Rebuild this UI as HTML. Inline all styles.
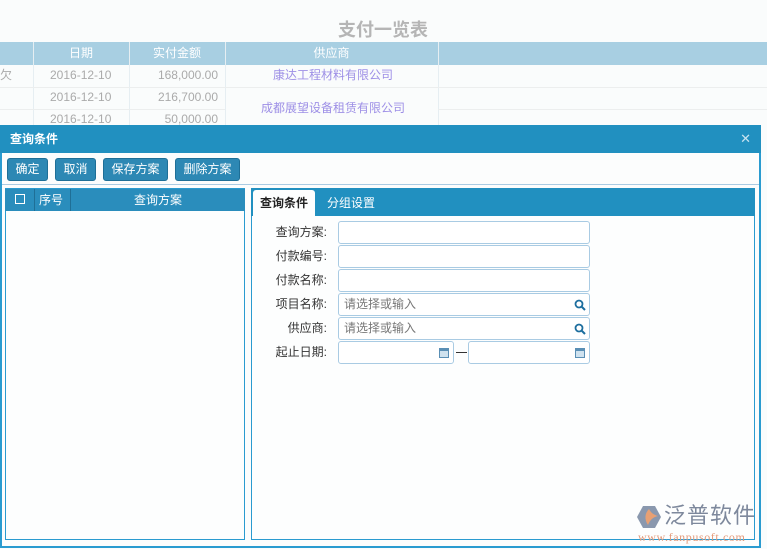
<!DOCTYPE html>
<html><head><meta charset="utf-8"><style>
*{margin:0;padding:0;box-sizing:border-box}
body{width:767px;height:549px;overflow:hidden;background:#fafcfc;font-family:"Liberation Sans","Noto Sans CJK SC",sans-serif;font-size:12px;position:relative}
.a{position:absolute}
.th{top:42px;height:23px;background:#a8cfe2;color:#fff;font-size:12px;line-height:23px;text-align:center}
.td{color:#aaa;font-size:12px;line-height:22px}
.hl{background:#eceeee;height:1px}
.btn{position:absolute;top:158px;height:23px;background:#2d88b4;border:1px solid #1e6f97;border-radius:3px;color:#fff;font-size:12px;line-height:21px;text-align:center}
.lbl{position:absolute;left:255px;width:72px;text-align:right;font-size:12px;color:#333}
.inp{position:absolute;left:338px;width:252px;height:23px;border:1px solid #a9cbe3;border-radius:3px;background:#fff;color:#777;font-size:12px;line-height:21px;padding-left:5px}
</style></head><body>
<div class="a" style="left:338px;top:16px;font-size:18px;font-weight:bold;color:#b5b5b5">支付一览表</div>
<div class="a th" style="left:0;width:767px"></div>
<div class="a th" style="left:33px;width:96px">日期</div>
<div class="a th" style="left:129px;width:96px">实付金额</div>
<div class="a th" style="left:225px;width:213px">供应商</div>
<div class="a" style="left:33px;top:42px;width:1px;height:85px;background:#e6eef2"></div>
<div class="a" style="left:129px;top:42px;width:1px;height:85px;background:#e6eef2"></div>
<div class="a" style="left:225px;top:42px;width:1px;height:85px;background:#e6eef2"></div>
<div class="a" style="left:438px;top:42px;width:1px;height:85px;background:#e6eef2"></div>
<div class="a hl" style="left:0;top:87px;width:767px"></div>
<div class="a hl" style="left:0;top:109px;width:225px"></div>
<div class="a hl" style="left:438px;top:109px;width:330px"></div>
<div class="a td" style="left:0;top:64px">欠</div>
<div class="a td" style="left:50px;top:64px">2016-12-10</div>
<div class="a td" style="left:50px;top:86px">2016-12-10</div>
<div class="a td" style="left:50px;top:108px">2016-12-10</div>
<div class="a td" style="left:129px;top:64px;width:89px;text-align:right">168,000.00</div>
<div class="a td" style="left:129px;top:86px;width:89px;text-align:right">216,700.00</div>
<div class="a td" style="left:129px;top:108px;width:89px;text-align:right">50,000.00</div>
<div class="a td" style="left:273px;top:64px;color:#9d8fe6">康达工程材料有限公司</div>
<div class="a td" style="left:261px;top:97px;color:#9d8fe6">成都展望设备租赁有限公司</div>

<div class="a" style="left:0;top:125px;width:761px;height:423px;background:#fcfdfd;border:2px solid #2a9bd0;border-top:none"></div>
<div class="a" style="left:0;top:125px;width:761px;height:28px;background:#2190c0;color:#fff;font-weight:bold;font-size:12px;line-height:28px;padding-left:10px">查询条件<span style="position:absolute;right:10px;top:0;font-weight:normal;font-size:13px;color:#c9e3f0">✕</span></div>
<div class="a" style="left:2px;top:184px;width:757px;height:1px;background:#a9cbe3"></div>
<div class="btn" style="left:7px;width:41px">确定</div>
<div class="btn" style="left:55px;width:41px">取消</div>
<div class="btn" style="left:103px;width:65px">保存方案</div>
<div class="btn" style="left:175px;width:65px">删除方案</div>

<div class="a" style="left:5px;top:188px;width:240px;height:352px;border:1px solid #2a9bd0;background:#fdfefe"></div>
<div class="a" style="left:5px;top:189px;width:240px;height:22px;background:#2a8dbc;color:#fff;line-height:22px"></div>
<div class="a" style="left:34px;top:189px;width:1px;height:22px;background:#1f6f96"></div>
<div class="a" style="left:70px;top:189px;width:1px;height:22px;background:#1f6f96"></div>
<div class="a" style="left:15px;top:194px;width:10px;height:10px;border:1.5px solid #fff"></div>
<div class="a" style="left:39px;top:189px;color:#fff;line-height:22px">序号</div>
<div class="a" style="left:71px;top:189px;width:174px;text-align:center;color:#fff;line-height:22px">查询方案</div>

<div class="a" style="left:251px;top:188px;width:504px;height:352px;border:1px solid #2a9bd0;border-top:none;background:#fdfefe"></div>
<div class="a" style="left:251px;top:188px;width:504px;height:28px;background:#2190c0"></div>
<div class="a" style="left:253px;top:190px;width:62px;height:26px;background:#fdfefe;border-radius:3px 3px 0 0;font-weight:bold;color:#222;line-height:26px;text-align:center">查询条件</div>
<div class="a" style="left:327px;top:190px;color:#fff;line-height:26px">分组设置</div>

<div class="lbl" style="top:223px">查询方案:</div><div class="inp" style="top:221px"></div>
<div class="lbl" style="top:247px">付款编号:</div><div class="inp" style="top:245px"></div>
<div class="lbl" style="top:271px">付款名称:</div><div class="inp" style="top:269px"></div>
<div class="lbl" style="top:295px">项目名称:</div><div class="inp" style="top:293px">请选择或输入<svg style="position:absolute;right:3px;top:5px" width="12" height="12" viewBox="0 0 12 12"><circle cx="5" cy="5" r="3.5" fill="none" stroke="#1d6e9e" stroke-width="1.8"/><path d="M7.5 7.5L11 11" stroke="#1d6e9e" stroke-width="2"/></svg></div>
<div class="lbl" style="top:319px">供应商:</div><div class="inp" style="top:317px">请选择或输入<svg style="position:absolute;right:3px;top:5px" width="12" height="12" viewBox="0 0 12 12"><circle cx="5" cy="5" r="3.5" fill="none" stroke="#1d6e9e" stroke-width="1.8"/><path d="M7.5 7.5L11 11" stroke="#1d6e9e" stroke-width="2"/></svg></div>
<div class="lbl" style="top:343px">起止日期:</div>
<div class="inp" style="top:341px;width:116px"><svg style="position:absolute;right:4px;top:5px" width="10" height="11" viewBox="0 0 10 11"><rect x="0.5" y="1.5" width="9" height="9" fill="#cfe2ef" stroke="#5a8fb5"/><rect x="0.5" y="1.5" width="9" height="2.5" fill="#5a8fb5"/></svg></div>
<div class="a" style="left:456px;top:352px;width:11px;height:1px;background:#333"></div>
<div class="inp" style="top:341px;left:468px;width:122px"><svg style="position:absolute;right:4px;top:5px" width="10" height="11" viewBox="0 0 10 11"><rect x="0.5" y="1.5" width="9" height="9" fill="#cfe2ef" stroke="#5a8fb5"/><rect x="0.5" y="1.5" width="9" height="2.5" fill="#5a8fb5"/></svg></div>

<svg class="a" style="left:636px;top:505px" width="26" height="24" viewBox="0 0 26 24"><path d="M7 1H19L25 12L19 23H7L1 12Z" fill="#8a98ae"/><path d="M13 4C9 8 8 14 12 20C14 15 17 12 22 11C18 10 15 8 13 4Z" fill="#e8a073"/></svg>
<div class="a" style="left:664px;top:503px;font-size:22px;color:#7d889c;letter-spacing:1px;line-height:26px">泛普软件</div>
<div class="a" style="left:638px;top:530px;font-size:12px;color:#e39a7a;font-family:'Liberation Serif',serif;letter-spacing:0.6px">www.fanpusoft.com</div>
</body></html>
